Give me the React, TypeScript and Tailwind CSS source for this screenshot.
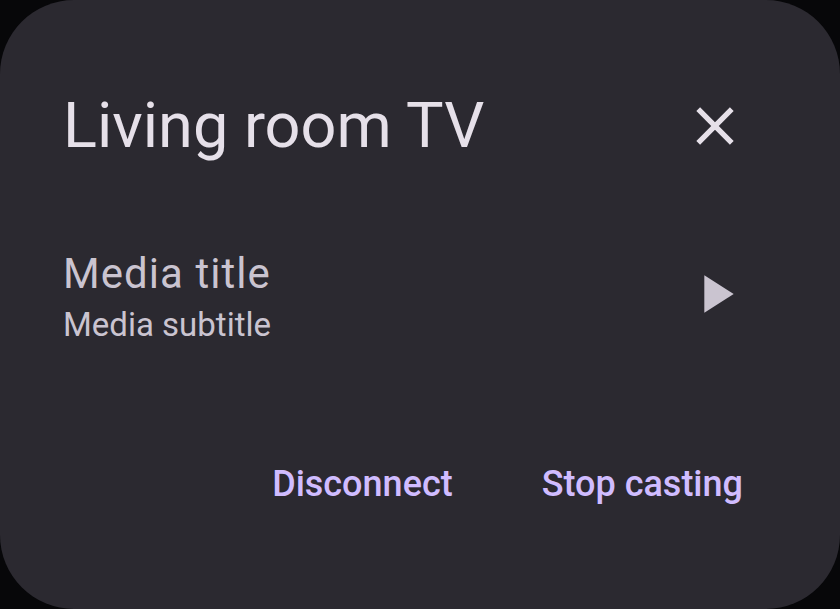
export default function App() {
  return (
    <div className="min-h-screen bg-[#070709] font-['Roboto',sans-serif]">
      <section
        aria-labelledby="device-name"
        className="flex min-h-screen flex-col rounded-[74px] bg-[#2b2930] px-[63px] pt-20"
      >
        <header className="flex items-center justify-between pr-[30px]">
          <h1 id="device-name" className="text-[63px] leading-[92px] text-[#e6e0e9]">
            Living room TV
          </h1>
          <button type="button" aria-label="Close" className="text-[#e6e0e9]">
            <svg viewBox="0 0 24 24" className="size-16" fill="currentColor">
              <path d="M19 6.41 17.59 5 12 10.59 6.41 5 5 6.41 10.59 12 5 17.59 6.41 19 12 13.41 17.59 19 19 17.59 13.41 12z" />
            </svg>
          </button>
        </header>
        <div className="mt-[71px] flex items-center justify-between pr-[30px] text-[#cac4d0]">
          <div>
            <h2 className="text-[42px] leading-[62px] tracking-wide">Media title</h2>
            <p className="text-[33px] leading-10">Media subtitle</p>
          </div>
          <button type="button" aria-label="Play">
            <svg viewBox="0 0 24 24" className="size-16" fill="currentColor">
              <path d="M8 5v14l11-7z" />
            </svg>
          </button>
        </div>
        <footer className="mt-[107px] flex justify-end gap-[89px] pr-[34px] text-[36px] leading-[64px] font-medium text-[#d0bcff]">
          <button type="button">Disconnect</button>
          <button type="button">Stop casting</button>
        </footer>
      </section>
    </div>
  );
}
